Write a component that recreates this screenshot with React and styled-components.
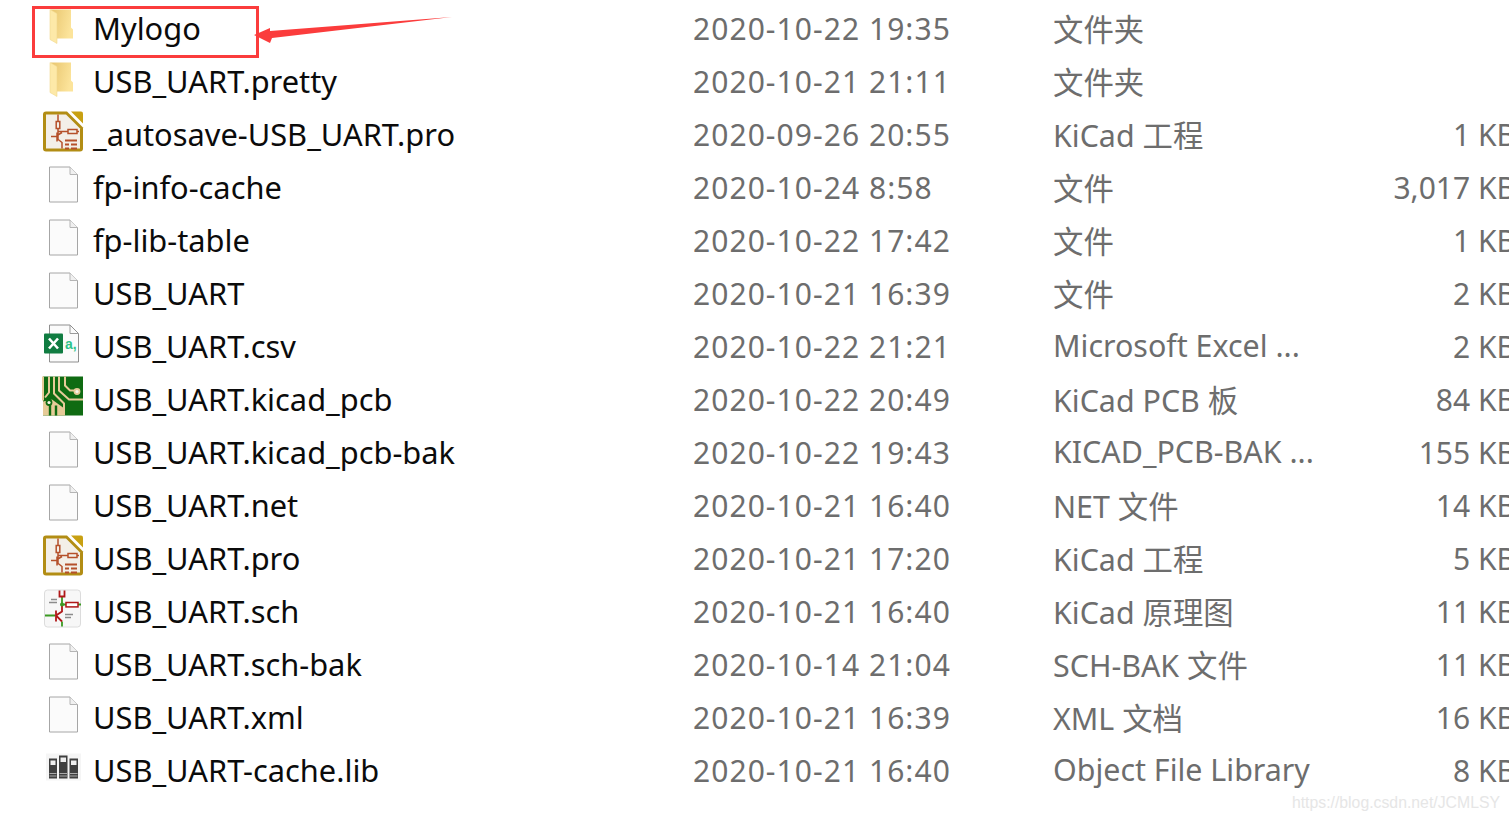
import React from 'react';
import styled, { createGlobalStyle } from 'styled-components';

const GlobalStyle = createGlobalStyle`
  html, body {
    margin: 0;
    padding: 0;
    background: #fff;
    overflow: hidden;
  }
`;

const Page = styled.div`
  position: relative;
  width: 1509px;
  height: 821px;
  overflow: hidden;
  background: #fff;
  font-family: "Noto Sans", "Noto Sans CJK SC", sans-serif;
`;

const List = styled.div`
  display: flex;
  flex-direction: column;
  padding-top: 1px;
`;

const Row = styled.div`
  display: grid;
  grid-template-columns: 93px 600px 360px 240px 223px;
  height: 53px;
  align-items: center;
  white-space: nowrap;
`;

const IconCell = styled.div`
  display: flex;
  justify-content: flex-end;
  align-items: center;
  height: 53px;
  padding-right: 8px;
`;

const Name = styled.div`
  color: #0b0b0b;
  font-size: 30.8px;
`;

const Cell = styled.div`
  color: #6d6d6d;
  font-size: 30.4px;
`;

const DateCell = styled(Cell)`
  font-size: 30px;
  letter-spacing: 1.05px;
  padding-top: 2px;
`;

const Size = styled(Cell)`
  font-size: 30px;
  text-align: right;
  padding-top: 2px;
`;

const Annotation = styled.svg`
  position: absolute;
  left: 0;
  top: 0;
  pointer-events: none;
`;

const Highlight = styled.div`
  position: absolute;
  left: 32px;
  top: 6px;
  width: 221px;
  height: 46px;
  border: 3px solid #fb3c3c;
`;

const Watermark = styled.div`
  position: absolute;
  right: 9px;
  bottom: 9px;
  font-family: "Liberation Sans", sans-serif;
  font-size: 15.8px;
  color: #e6e6e6;
`;

const Glyph = ({ children }) => (
  <svg width="52" height="53" viewBox="0 -6.5 52 53">{children}</svg>
);

const FolderIcon = () => (
  <Glyph>
    <defs>
      <linearGradient id="folderBack" x1="0" y1="0" x2="1" y2="0.3">
        <stop offset="0" stopColor="#e8c56e" />
        <stop offset="1" stopColor="#fce49b" />
      </linearGradient>
    </defs>
    <path d="M18 2 H38 V20 L40 22 V31 H24 Z" fill="url(#folderBack)" />
    <path d="M17 2 L24 6 V36 L17 32 Z" fill="#fde9a8" stroke="#f2d98f" strokeWidth="0.6" />
  </Glyph>
);

const FileIcon = () => (
  <Glyph>
    <path d="M16.5 0.5 H37 L44.5 8 V35.5 H16.5 Z" fill="#fbfbfb" stroke="#a6a6a6" />
    <path d="M37 0.5 V8 H44.5" fill="#f0f0f0" stroke="#b5b5b5" />
  </Glyph>
);

const ProjectIcon = () => (
  <Glyph>
    <path d="M10 1 Q10 -2 13 -2 H34 L50 14 V35 Q50 38 47 38 H13 Q10 38 10 35 Z" fill="#b28d14" />
    <path d="M13 1 H33 L47 15 V35 H13 Z" fill="#f3efe8" />
    <path d="M38 -2 H48 Q50 -2 50 0 V10 Z" fill="#c8a012" />
    <g stroke="#b5502a" strokeWidth="1.5" fill="none">
      <path d="M25 1 V27 M25 18 H35 M44 18 H46 M18 23 H24 M24 19 V28 M24 22 L29 19 M24 25 L29 29 V35" />
      <rect x="23.2" y="8" width="3.6" height="7" fill="#f3efe8" />
      <rect x="35" y="16" width="9" height="4" fill="#f3efe8" />
      <path d="M32 27 H44 M32 31 H36 M38 31 H44 M32 35 H36 M38 35 H44" strokeWidth="1.8" />
    </g>
  </Glyph>
);

const CsvIcon = () => (
  <Glyph>
    <path d="M16.5 -0.5 H37 L45.5 8 V36.5 H16.5 Z" fill="#fbfbfb" stroke="#8f8f8f" />
    <path d="M37 -0.5 V8 H45.5" fill="none" stroke="#9a9a9a" />
    <rect x="11" y="8" width="19" height="20" rx="1" fill="#107c41" />
    <path d="M16 13 L25 23 M25 13 L16 23" stroke="#fff" strokeWidth="2.6" />
    <text x="32" y="23" fontFamily="Liberation Sans" fontSize="14" fontWeight="700" fill="#2fc38a">a,</text>
  </Glyph>
);

const PcbIcon = () => (
  <Glyph>
    <rect x="10" y="-2" width="40" height="39" fill="#0f6b12" />
    <path d="M10 23 L19 21 L30 29 V37 H10 Z" fill="#e6cb98" />
    <path d="M17 26 V37 M23 27 V37" stroke="#0f6b12" strokeWidth="2.4" />
    <g stroke="#e6cb98" strokeWidth="2" fill="none">
      <path d="M10 -2 V22" />
      <path d="M16 -2 V14 L12 19" />
      <path d="M21 -2 V15 L31 25 V37" />
      <path d="M26 -2 V12 L36 21 H50" />
      <path d="M32 -2 V7 L37 12 H45" />
    </g>
    <circle cx="44" cy="13" r="3.4" fill="#e6cb98" />
    <circle cx="44" cy="13" r="1.6" fill="#f7f5ea" />
    <circle cx="16" cy="24" r="3.4" fill="#0f6b12" />
    <circle cx="16" cy="24" r="1.6" fill="#f7f5ea" />
  </Glyph>
);

const SchIcon = () => (
  <Glyph>
    <rect x="11.5" y="-0.5" width="36" height="37" rx="3" fill="#f7f7f7" stroke="#dcdcdc" />
    <path d="M29 6 V14 M29 14 H33 M45 14 H48 M12 25 H22 M29 31 V36" stroke="#3a9a22" strokeWidth="1.8" fill="none" />
    <path d="M26.5 0 V6 H31.5 V0" stroke="#b01818" strokeWidth="1.8" fill="none" />
    <rect x="33" y="12" width="12" height="4.4" fill="#fff" stroke="#b01818" strokeWidth="1.5" />
    <path d="M29 14 V21 L23 25 L29 31 M23 20 V31" stroke="#b01818" strokeWidth="1.8" fill="none" />
    <path d="M18 9 H24 M16 12 H24 M32 24 H40 M32 27 H38" stroke="#8c8c8c" strokeWidth="1.3" />
    <circle cx="29" cy="14" r="2" fill="#3a9a22" />
  </Glyph>
);

const LibIcon = () => (
  <Glyph>
    <rect x="13" y="4" width="35" height="27" fill="#f5f5f5" />
    <rect x="16" y="9" width="8" height="20" fill="#3f3f3f" />
    <rect x="26" y="6" width="8.5" height="23" fill="#3f3f3f" />
    <rect x="36.5" y="9" width="8.5" height="20" fill="#3f3f3f" />
    <rect x="17.5" y="11" width="5" height="4.5" fill="#eee" />
    <rect x="27.5" y="8" width="5.5" height="4.5" fill="#eee" />
    <rect x="38" y="11" width="5.5" height="4.5" fill="#eee" />
    <path d="M16.5 24 H23.5 M16.5 26.5 H23.5 M26.5 24 H34 M26.5 26.5 H34 M37 24 H44.5 M37 26.5 H44.5" stroke="#aaa" strokeWidth="1" />
  </Glyph>
);

const ICONS = {
  folder: FolderIcon,
  file: FileIcon,
  project: ProjectIcon,
  csv: CsvIcon,
  pcb: PcbIcon,
  sch: SchIcon,
  lib: LibIcon,
};

const FILES = [
  ['folder', 'Mylogo', '2020-10-22 19:35', '文件夹', ''],
  ['folder', 'USB_UART.pretty', '2020-10-21 21:11', '文件夹', ''],
  ['project', '_autosave-USB_UART.pro', '2020-09-26 20:55', 'KiCad 工程', '1 KB'],
  ['file', 'fp-info-cache', '2020-10-24 8:58', '文件', '3,017 KB'],
  ['file', 'fp-lib-table', '2020-10-22 17:42', '文件', '1 KB'],
  ['file', 'USB_UART', '2020-10-21 16:39', '文件', '2 KB'],
  ['csv', 'USB_UART.csv', '2020-10-22 21:21', 'Microsoft Excel ...', '2 KB'],
  ['pcb', 'USB_UART.kicad_pcb', '2020-10-22 20:49', 'KiCad PCB 板', '84 KB'],
  ['file', 'USB_UART.kicad_pcb-bak', '2020-10-22 19:43', 'KICAD_PCB-BAK ...', '155 KB'],
  ['file', 'USB_UART.net', '2020-10-21 16:40', 'NET 文件', '14 KB'],
  ['project', 'USB_UART.pro', '2020-10-21 17:20', 'KiCad 工程', '5 KB'],
  ['sch', 'USB_UART.sch', '2020-10-21 16:40', 'KiCad 原理图', '11 KB'],
  ['file', 'USB_UART.sch-bak', '2020-10-14 21:04', 'SCH-BAK 文件', '11 KB'],
  ['file', 'USB_UART.xml', '2020-10-21 16:39', 'XML 文档', '16 KB'],
  ['lib', 'USB_UART-cache.lib', '2020-10-21 16:40', 'Object File Library', '8 KB'],
];

const App = () => (
  <Page>
    <GlobalStyle />
    <List>
      {FILES.map(([icon, name, date, type, size]) => {
        const Icon = ICONS[icon];
        return (
          <Row key={name}>
            <IconCell><Icon /></IconCell>
            <Name>{name}</Name>
            <DateCell>{date}</DateCell>
            <Cell>{type}</Cell>
            <Size>{size}</Size>
          </Row>
        );
      })}
    </List>
    <Highlight />
    <Annotation width="480" height="60" viewBox="0 0 480 60">
      <path d="M254 35 L270 28 L270 31 L452 17 L272 38 L270 43 Z" fill="#fb3c3c" />
    </Annotation>
    <Watermark>https://blog.csdn.net/JCMLSY</Watermark>
  </Page>
);

export default App;
